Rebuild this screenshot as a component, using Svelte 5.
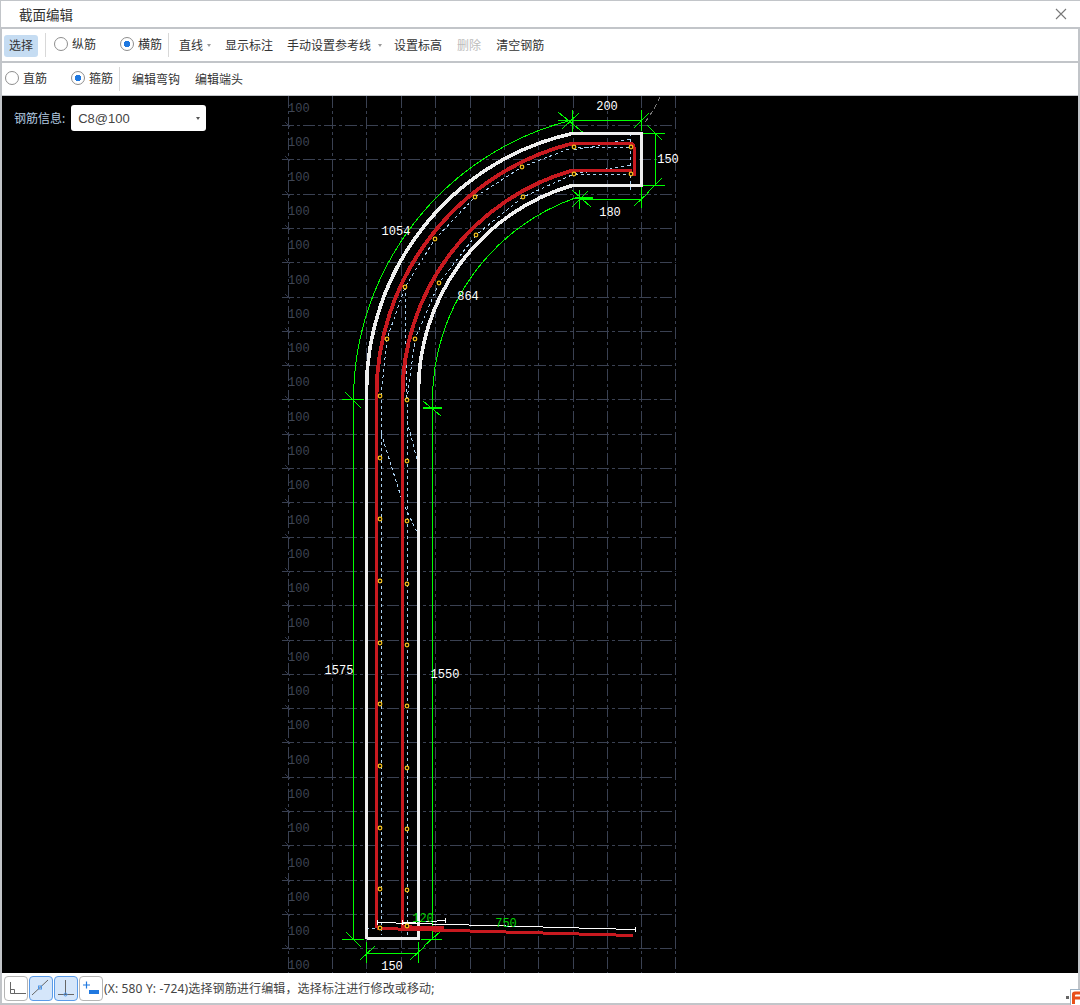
<script>
  const gridX = [288, 332, 366, 401, 435, 470, 504, 538, 573, 607, 641, 675];
  const gridY = Array.from({ length: 25 }, (_, i) => Math.round(125 + i * 34.3));
  const labels = Array.from({ length: 26 }, (_, i) => Math.round(112 + i * 34.3));

  const dots = [
    ...[396, 458, 519, 581, 643, 704, 766, 828, 889, 928].map((y) => [380, y]),
    ...[400, 461, 521, 584, 645, 706, 768, 829, 890, 926].map((y) => [407, y]),
    [387, 339], [405, 287], [435, 239], [475, 197], [522, 167], [574, 147], [631, 147],
    [415, 339], [439, 283], [476, 235], [523, 197], [574, 174], [631, 174]
  ];

  const greenTicks = [
    [558, 112, 585, 134], [562, 129, 579, 113], [572.5, 110, 572.5, 132],
    [641.5, 110, 641.5, 131], [634, 128, 649, 113], [558, 120.5, 641, 120.5],
    [641, 133.5, 665, 133.5], [647, 125, 662, 140], [641, 185.5, 665, 185.5], [647, 193, 662, 178],
    [655.5, 133, 655.5, 185], [641.5, 186, 641.5, 208], [634, 206, 649, 192], [579.5, 190, 579.5, 209],
    [572, 190, 591, 207], [572, 207, 588, 191], [579, 199.5, 641, 199.5],
    [342, 399.5, 364, 399.5], [345, 392, 361, 408], [342, 939.5, 364, 939.5], [346, 932, 361, 947],
    [421, 939.5, 442, 939.5], [424, 946, 440, 932], [366.5, 942, 366.5, 963], [418.5, 942, 418.5, 963],
    [366, 953.5, 418, 953.5], [360, 960, 375, 946], [410, 960, 425, 946],
    [432.5, 400, 432.5, 939], [353.5, 400, 353.5, 939], [423, 401, 441, 416]
  ];

  const blueLines = [
    '381.5,400 381.5,935', '407.5,404 407.5,935', '405,287 407,400',
    '381,396 387,339 405,287 435,239 475,197 522,167 574,147 631,147',
    '407,400 415,339 439,283 476,235 523,197 574,174 631,174',
    '381,433 402,500', '405,507 417,532', '407,421 418,463',
    '574,150 631,139', '574,174 631,165', '630.5,133 630.5,190', '366,928.5 381,928.5'
  ];

  const dims = [
    ['200', 607, 110], ['150', 668, 163], ['180', 610, 216], ['1054', 396, 235],
    ['864', 468, 300], ['1575', 339, 674], ['1550', 445, 678], ['150', 392, 970]
  ];

  const redStepsA = [
    [377, 928, 398], [398, 929, 433], [433, 930, 470], [470, 931, 506],
    [506, 932, 543], [543, 933, 579], [579, 934, 616], [616, 935, 633]
  ];
  const redStepsB = [[402, 926, 412], [412, 927, 444]];
  const whiteSteps = [
    [377, 922.5, 396], [396, 923.5, 432], [432, 924.5, 469], [469, 925.5, 506],
    [506, 926.5, 543], [543, 927.5, 579], [579, 928.5, 616], [616, 929.5, 635]
  ];
  const whiteStepsB = [[402, 922.5, 416], [416, 921.5, 437], [437, 920.5, 445]];
</script>

<div class="win">
  <header class="title">
    <span>截面编辑</span>
    <svg class="close" width="12" height="12" viewBox="0 0 12 12"><path d="M1 1 L11 11 M11 1 L1 11" /></svg>
  </header>

  <div class="row">
    <span class="item active m2">选择</span>
    <i class="sep m7"></i>
    <span class="radio m8"><b></b>纵筋</span>
    <span class="radio on m24"><b></b>横筋</span>
    <i class="sep m6"></i>
    <span class="item m10">直线</span><i class="caret m4"></i>
    <span class="item m14">显示标注</span>
    <span class="item m14">手动设置参考线</span><i class="caret m7"></i>
    <span class="item m12">设置标高</span>
    <span class="item off m15">删除</span>
    <span class="item m15">清空钢筋</span>
  </div>

  <div class="row second">
    <span class="radio m3"><b></b>直筋</span>
    <span class="radio on m24"><b></b>箍筋</span>
    <i class="sep m6"></i>
    <span class="item m12">编辑弯钩</span>
    <span class="item m15">编辑端头</span>
  </div>

  <main class="canvas">
    <svg width="1076" height="877" viewBox="2 96 1076 877" shape-rendering="crispEdges">
      <g class="grid">
        {#each gridX as x}<line x1={x + 0.5} y1="96" x2={x + 0.5} y2="973" />{/each}
        {#each gridY as y}<line x1="282" y1={y + 0.5} x2="676" y2={y + 0.5} />{/each}
      </g>
      <g class="gridtick">
        {#each gridY as y}<line x1="285" y1={y - 3} x2="290" y2={y + 2} />{/each}
      </g>
      <g class="lab">
        {#each labels as y}<text x="288" {y}>100</text>{/each}
      </g>
      <path class="ghost" d="M660 97 Q654 110 644 124" />

      <g class="blue">
        {#each blueLines as p}<polyline points={p} />{/each}
      </g>

      <g class="thin">
        <path d="M353.5 400 A288.8 288.8 0 0 1 572 120" />
        <path d="M432.5 400 A214.2 214.2 0 0 1 575 198" />
        {#each greenTicks as t}<line x1={t[0]} y1={t[1]} x2={t[2]} y2={t[3]} />{/each}
      </g>
      <path class="thick" d="M423 408 H442 M575 198 H593" />

      <path class="white" d="M366.5 938.5 V390 M572 133.5 H641.5 V185.5 H578 M418.5 390 V938.5 H366.5" />
      <path class="white arc" d="M366.5 392 A263.6 263.6 0 0 1 572 133.5 M579 185.5 L572 185.5 A213.4 213.4 0 0 0 418.5 392" />

      <path class="red" d="M376.5 928 V395 M572 143.5 H630 Q634 143.5 634 147 V176 M402.5 928 V395 M572 170.5 H632" />
      <path class="red arc" d="M376.5 397 A260 260 0 0 1 572 143.5 M402.5 397 A233.9 233.9 0 0 1 572 170.5" />

      <g class="redsteps">
        {#each [...redStepsA, ...redStepsB] as s}<line x1={s[0]} y1={s[1]} x2={s[2]} y2={s[1]} />{/each}
      </g>
      <g class="whitesteps">
        {#each [...whiteSteps, ...whiteStepsB] as s}<line x1={s[0]} y1={s[1]} x2={s[2]} y2={s[1]} />{/each}
        <path d="M377.5 920 V925 M402.5 920 V925 M635.5 927 V932 M445.5 918 V923" />
      </g>

      <g class="dots">
        {#each dots as d}<circle cx={d[0]} cy={d[1]} r="1.8" />{/each}
      </g>

      <g class="dim">
        {#each dims as d}<text x={d[1]} y={d[2]}>{d[0]}</text>{/each}
      </g>
      <g class="dimgreen">
        <text x="423" y="922">120</text>
        <text x="506" y="927">750</text>
      </g>
    </svg>

    <div class="rebar">
      <label for="rebar-select">钢筋信息:</label>
      <div class="select" id="rebar-select"><span>C8@100</span><i class="caret dark"></i></div>
    </div>
  </main>

  <footer class="status">
    <span class="tool">
      <svg width="22" height="23" viewBox="0 0 22 23"><path class="ic" d="M5.5 5 V16.5 H21 M5.5 12.5 H9.5 V16.5" /></svg>
    </span>
    <span class="tool sel">
      <svg width="22" height="23" viewBox="0 0 22 23"><path class="ic" d="M2 18 L18 3" /><rect class="nd" x="8.5" y="9" width="3" height="3" /></svg>
    </span>
    <span class="tool sel">
      <svg width="22" height="23" viewBox="0 0 22 23"><path class="ic" d="M10.5 3 V17 M3 17.5 H19" /><circle class="nd" cx="10.5" cy="17.5" r="1.5" /></svg>
    </span>
    <span class="tool">
      <svg width="22" height="23" viewBox="0 0 22 23"><path class="pl" d="M3 8 H10 M6.5 4.5 V11.5" /><rect class="bl" x="9" y="13" width="10" height="4" /></svg>
    </span>
    <span class="msg">(X: 580 Y: -724)选择钢筋进行编辑，选择标注进行修改或移动;</span>
  </footer>

  <div class="ime">
    <svg width="9" height="14" viewBox="0 0 9 14"><path d="M1 14 V4 Q1 1.5 4 1.5 H9 V4.5 H5 Q4 4.5 4 5.5 V6.5 H9 V9.5 H4 V14 Z" /></svg>
  </div>
  <i class="grip"></i>
</div>

<style>
  :global(body) { margin: 0; background: #c2c5c9; }
  .win {
    position: relative;
    width: 1080px;
    height: 1005px;
    box-sizing: border-box;
    overflow: hidden;
    display: flex;
    flex-direction: column;
    background: #c2c5c9;
    font: 12px "Noto Sans", "Noto Sans CJK SC", sans-serif;
    color: #333;
  }
  .title {
    height: 26px;
    margin: 1px 0 2px 1px;
    background: #fff;
    display: flex;
    align-items: center;
    justify-content: space-between;
    padding: 0 13px 0 18px;
    font-size: 13.5px;
    flex: none;
  }
  .close path { stroke: #777; stroke-width: 1.1; fill: none; }
  .row {
    height: 32px;
    margin: 0 2px 2px 2px;
    background: #fff;
    display: flex;
    align-items: center;
    flex: none;
  }
  .row.second { margin-bottom: 1px; }
  .item { line-height: 22px; white-space: nowrap; margin-top: 2px; }
  .active { background: #c5dcf2; border-radius: 3px; padding: 0 5px; }
  .off { color: #bcbcbc; }
  .sep { width: 1px; height: 24px; background: #d8d8d8; }
  .caret {
    width: 0;
    height: 0;
    border: 2.5px solid transparent;
    border-top: 3px solid #999;
    border-bottom: 0;
  }
  .caret.dark { border-top-color: #555; }
  .radio { display: inline-flex; align-items: center; gap: 4px; white-space: nowrap; margin-bottom: 2px; }
  .radio b {
    width: 14px;
    height: 14px;
    box-sizing: border-box;
    border: 1px solid #8e8e8e;
    border-radius: 50%;
    background: #fff;
    display: inline-block;
  }
  .radio.on b {
    background: radial-gradient(circle, #1f78e0 0 3px, #fff 3.5px);
  }
  .m2 { margin-left: 2px; } .m3 { margin-left: 3px; } .m4 { margin-left: 4px; }
  .m6 { margin-left: 6px; } .m7 { margin-left: 7px; } .m8 { margin-left: 8px; }
  .m10 { margin-left: 10px; } .m12 { margin-left: 12px; }
  .m14 { margin-left: 14px; } .m15 { margin-left: 15px; } .m24 { margin-left: 24px; }

  .canvas {
    position: relative;
    flex: none;
    height: 877px;
    margin: 0 2px;
    background: #000;
  }
  .canvas svg { display: block; }
  .grid line { stroke: #3a4152; stroke-width: 1; stroke-dasharray: 12 3 3 3; }
  .gridtick line { stroke: #30364a; stroke-width: 1; }
  .lab text { fill: #3f4554; font: 12px "Liberation Mono", monospace; }
  .ghost { fill: none; stroke: #777; stroke-dasharray: 5 3; }
  .blue polyline { fill: none; stroke: #a9d0f0; stroke-width: 1; stroke-dasharray: 3 3; }
  .thin path, .thin line { fill: none; stroke: #00ff00; stroke-width: 1; }
  .thick { fill: none; stroke: #00ff00; stroke-width: 2; }
  .white { fill: none; stroke: #eeeeee; stroke-width: 3; }
  .white.arc { stroke-width: 3.6; }
  .red { fill: none; stroke: #c8191f; stroke-width: 3; }
  .red.arc { stroke-width: 3.8; }
  .redsteps line { stroke: #c8191f; stroke-width: 3; }
  .whitesteps line, .whitesteps path { stroke: #fff; stroke-width: 1; fill: none; }
  .dots { shape-rendering: auto; }
  .dots circle { fill: #1a1200; stroke: #f6c21c; stroke-width: 1.2; }
  .dim text { fill: #fff; font: 12px "Liberation Mono", monospace; text-anchor: middle; }
  .dimgreen text { fill: #00d000; font: 12px "Liberation Mono", monospace; text-anchor: middle; }

  .rebar {
    position: absolute;
    left: 12px;
    top: 9px;
    display: flex;
    align-items: center;
    gap: 6px;
    color: #b4cbe0;
  }
  .select {
    width: 135px;
    height: 26px;
    box-sizing: border-box;
    background: #fff;
    border-radius: 3px;
    display: flex;
    align-items: center;
    justify-content: space-between;
    padding: 0 6px 0 7px;
    color: #444;
    font: 13px "Liberation Sans", sans-serif;
  }

  .status {
    flex: none;
    height: 30px;
    margin: 0 2px;
    padding-left: 2px;
    background: #fff;
    display: flex;
    align-items: center;
    gap: 1px;
    color: #444;
  }
  .tool {
    width: 24px;
    height: 25px;
    box-sizing: border-box;
    border: 1px solid #b5b5b5;
    border-radius: 4px;
    display: inline-flex;
  }
  .tool svg { display: block; }
  .sel { background: #d5e6fa; border-color: #5a9be8; }
  .ic { fill: none; stroke: #666; stroke-width: 1; }
  .nd { fill: none; stroke: #4d95e8; stroke-width: 1; }
  .pl { fill: none; stroke: #1f78e0; stroke-width: 1.2; }
  .bl { fill: #1f78e0; }
  .msg { white-space: nowrap; letter-spacing: 0.15px; }
  .ime {
    position: absolute;
    right: 0;
    bottom: 0;
    width: 9px;
    height: 15px;
    background: #fff;
    border: 1px solid #9fb3c4;
    border-width: 1px 0 0 1px;
  }
  .ime svg { display: block; }
  .ime path { fill: #e8501a; }
  .grip { position: absolute; left: 1066px; top: 996px; width: 3px; height: 3px; background: #666; }
</style>
